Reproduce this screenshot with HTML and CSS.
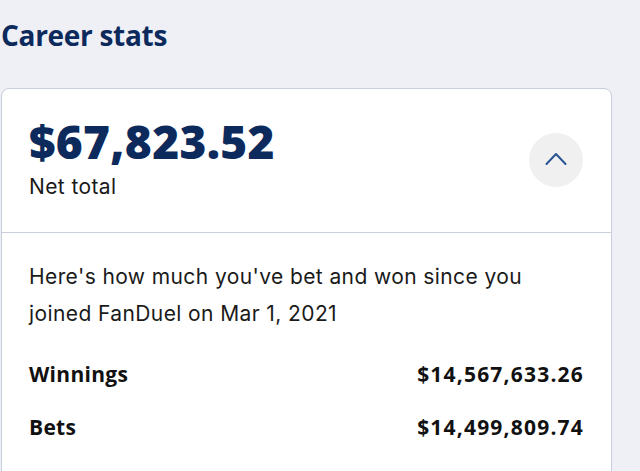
FILE: index.html
```html
<!DOCTYPE html>
<html>
<head>
<meta charset="utf-8">
<link rel="stylesheet" href="styles.css">
</head>
<body>
<h2 class="title">Career stats</h2>
<section class="card">
  <div class="card-head">
    <div class="totals">
      <div class="amount">$67,823.52</div>
      <div class="label">Net total</div>
    </div>
    <button class="toggle" aria-label="Collapse">
      <svg width="22" height="14" viewBox="0 0 22 14"><path d="M1.5 12 L11 2 L20.5 12" fill="none" stroke="#2a5592" stroke-width="2" stroke-linecap="round" stroke-linejoin="round"/></svg>
    </button>
  </div>
  <div class="card-body">
    <p class="intro">Here's how much you've bet and won since you joined FanDuel on Mar 1, 2021</p>
    <div class="row first"><span>Winnings</span><span class="value">$14,567,633.26</span></div>
    <div class="row"><span>Bets</span><span class="value">$14,499,809.74</span></div>
  </div>
</section>
</body>
</html>
```
FILE: styles.css
```css
html, body {
  margin: 0;
  padding: 0;
  background: #eef0f6;
  font-family: Inter, "Open Sans", sans-serif;
  overflow: hidden;
}
body {
  padding: 18px 28px 0 1px;
}
.title {
  margin: 0;
  font-family: "Open Sans", sans-serif;
  font-size: 28px;
  font-weight: 700;
  color: #0c2a5b;
  line-height: 34px;
  letter-spacing: -0.3px;
}
.card {
  margin-top: 36px;
  background: #fff;
  border: 1px solid #c8cedb;
  border-radius: 8px;
  height: 460px;
}
.card-head {
  display: flex;
  align-items: center;
  justify-content: space-between;
  padding: 26px 28px 32px 27px;
  border-bottom: 1px solid #c8cedb;
}
.amount {
  font-family: "Open Sans", sans-serif;
  font-size: 46px;
  font-weight: 800;
  color: #0c2a5b;
  line-height: 52px;
  letter-spacing: 0.3px;
}
.label {
  font-size: 21px;
  color: #1a1a1a;
  line-height: 26px;
  margin-top: 7px;
  letter-spacing: 0.4px;
}
.toggle {
  width: 54px;
  height: 54px;
  border-radius: 50%;
  border: none;
  background: #f0f0f1;
  display: flex;
  align-items: center;
  justify-content: center;
  padding: 0 0 2px;
  margin-top: 4px;
}
.card-body {
  padding: 25px 28px 0 27px;
}
.intro {
  margin: 0;
  font-size: 21px;
  line-height: 37px;
  color: #1a1a1a;
  letter-spacing: 0.4px;
}
.row {
  display: flex;
  justify-content: space-between;
  font-family: "Open Sans", sans-serif;
  font-size: 21px;
  font-weight: 700;
  color: #111;
  line-height: 28px;
  letter-spacing: 0.3px;
  margin-top: 25px;
}
.row.first {
  margin-top: 28px;
}
.value {
  letter-spacing: 1.2px;
  margin-right: -1px;
}
```
